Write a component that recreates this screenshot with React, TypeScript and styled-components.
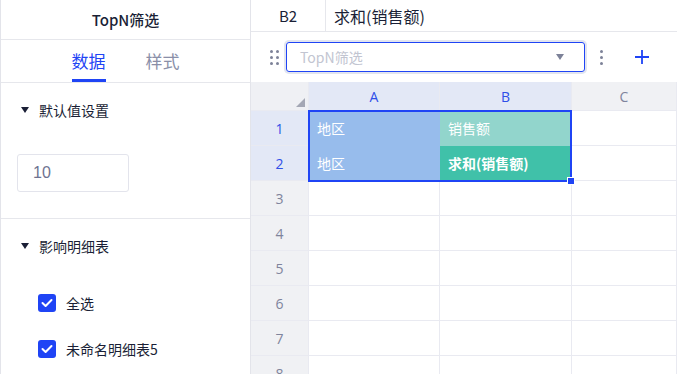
import styled, { createGlobalStyle } from "styled-components"

const GlobalStyle = createGlobalStyle`
  html, body {
    margin: 0;
    padding: 0;
    overflow: hidden;
    background: #fff;
  }
  body {
    font-family: "Noto Sans CJK SC", "Noto Sans", sans-serif;
    color: #1a1f36;
  }
`

const Page = styled.div`
  display: flex;
  width: 677px;
  height: 374px;
  overflow: hidden;
`

const SidePanel = styled.div`
  width: 249px;
  flex: none;
  border-left: 1px solid #e3e4ea;
  border-right: 1px solid #e3e4ea;
  display: flex;
  flex-direction: column;
`

const PanelTitle = styled.div`
  height: 40px;
  flex: none;
  display: flex;
  align-items: center;
  justify-content: center;
  font-size: 15px;
  font-weight: 500;
  border-bottom: 1px solid #e6e7ec;
  box-sizing: border-box;
`

const Tabs = styled.div`
  height: 43px;
  flex: none;
  display: flex;
  justify-content: center;
  gap: 40px;
  border-bottom: 1px solid #e6e7ec;
  box-sizing: border-box;
`

const Tab = styled.div<{ $active?: boolean }>`
  font-size: 17px;
  display: flex;
  align-items: center;
  padding-top: 1px;
  color: ${(p) => (p.$active ? "#1f44f5" : "#8a8fa8")};
  border-bottom: 3px solid ${(p) => (p.$active ? "#1f44f5" : "transparent")};
  box-sizing: border-box;
  height: 42px;
`

const Section = styled.div<{ $border?: boolean }>`
  flex: none;
  padding: 0 16px;
  border-bottom: ${(p) => (p.$border ? "1px solid #e6e7ec" : "none")};
`

const SectionHead = styled.div`
  display: flex;
  align-items: center;
  gap: 10px;
  height: 54px;
  padding-left: 4px;
  font-size: 14px;
  color: #1a1f36;
`

const Caret = styled.span`
  width: 0;
  height: 0;
  border-left: 4.5px solid transparent;
  border-right: 4.5px solid transparent;
  border-top: 6px solid #1a1f36;
`

const NumberBox = styled.div`
  width: 112px;
  height: 38px;
  box-sizing: border-box;
  border: 1px solid #e3e4ec;
  border-radius: 3px;
  display: flex;
  align-items: center;
  padding-left: 15px;
  font-family: "Liberation Sans", Arial, sans-serif;
  font-size: 16px;
  color: #6e7391;
  margin: 17px 0 26px;
`

const CheckList = styled.div`
  display: flex;
  flex-direction: column;
  gap: 26px;
  padding: 20px 0 0 21px;
`

const CheckRow = styled.div`
  display: flex;
  align-items: center;
  gap: 10px;
  font-size: 14px;
  color: #1a1f36;
`

const CheckBox = styled.span`
  width: 18px;
  height: 18px;
  border-radius: 3px;
  background: #1f44f5;
  display: flex;
  align-items: center;
  justify-content: center;
`

const Main = styled.div`
  flex: 1;
  display: flex;
  flex-direction: column;
  min-width: 0;
`

const FormulaBar = styled.div`
  height: 32px;
  flex: none;
  display: flex;
  border-bottom: 1px solid #e6e7ec;
  box-sizing: border-box;
  font-size: 16px;
`

const CellRef = styled.div`
  width: 74px;
  border-right: 1px solid #e6e7ec;
  display: flex;
  align-items: center;
  justify-content: center;
  color: #1a1f36;
  font-size: 15px;
`

const FormulaText = styled.div`
  display: flex;
  align-items: center;
  padding-left: 8px;
  color: #1a1f36;
`

const Toolbar = styled.div`
  height: 50px;
  flex: none;
  display: flex;
  align-items: center;
  padding-left: 19px;
`

const DragHandle = styled.div`
  display: grid;
  grid-template-columns: repeat(2, 3px);
  gap: 3px 3px;
  margin-right: 7px;
`

const Dot = styled.span`
  width: 3px;
  height: 3px;
  border-radius: 50%;
  background: #7d8298;
`

const Select = styled.div`
  width: 299px;
  height: 30px;
  box-sizing: border-box;
  border: 1px solid #1f44f5;
  border-radius: 3px;
  box-shadow: 0 0 0 2px #e2e5ef;
  display: flex;
  align-items: center;
  justify-content: space-between;
  padding: 0 20px 0 13px;
  font-size: 14px;
  color: #c2c5d1;
`

const SelectCaret = styled.span`
  width: 0;
  height: 0;
  border-left: 4.5px solid transparent;
  border-right: 4.5px solid transparent;
  border-top: 6px solid #7d8298;
`

const Kebab = styled.div`
  display: flex;
  flex-direction: column;
  gap: 3px;
  margin-left: 15px;
`

const PlusBtn = styled.div`
  margin-left: 31px;
  display: flex;
`

const SheetWrap = styled.div`
  position: relative;
  flex: 1;
  overflow: hidden;
`

const Sheet = styled.div`
  display: grid;
  grid-template-columns: 58px 131px 132px 1fr;
  grid-template-rows: 29px repeat(8, 35px);
`

type Tone = "corner" | "head" | "headSel" | "rowSel" | "row" | "cell" | "a" | "b1" | "b2"

const toneBg: Record<Tone, string> = {
  corner: "#eff0f4",
  head: "#f0f1f4",
  headSel: "#e3e8f6",
  rowSel: "#e3e8f6",
  row: "#f0f1f4",
  cell: "#fff",
  a: "#97bcec",
  b1: "#92d5cc",
  b2: "#40c1a9",
}

const isHeader = (t: Tone) => t === "head" || t === "headSel" || t === "row" || t === "rowSel"
const isFilled = (t: Tone) => t === "a" || t === "b1" || t === "b2"

const Cell = styled.div<{ $tone: Tone; $bold?: boolean }>`
  position: relative;
  box-sizing: border-box;
  border-right: 1px solid ${(p) => (isFilled(p.$tone) ? toneBg[p.$tone] : "#e9eaf1")};
  border-bottom: 1px solid ${(p) => (isFilled(p.$tone) ? toneBg[p.$tone] : "#e9eaf1")};
  background: ${(p) => toneBg[p.$tone]};
  display: flex;
  align-items: center;
  font-size: 14px;
  font-weight: ${(p) => (p.$bold ? 600 : 400)};
  justify-content: ${(p) => (isHeader(p.$tone) ? "center" : "flex-start")};
  padding-left: ${(p) => (isFilled(p.$tone) ? "8px" : "0")};
  color: ${(p) =>
    p.$tone === "headSel" || p.$tone === "rowSel"
      ? "#2f4fe8"
      : p.$tone === "head" || p.$tone === "row"
      ? "#7f849c"
      : "#fff"};
  font-family: ${(p) =>
    isHeader(p.$tone) ? `"Open Sans", "Noto Sans", sans-serif` : `"Noto Sans CJK SC", sans-serif`};
`

const CornerMark = styled.span`
  position: absolute;
  right: 3px;
  bottom: 3px;
  width: 0;
  height: 0;
  border-left: 9px solid transparent;
  border-bottom: 9px solid #a4a7b4;
`

const Selection = styled.div`
  position: absolute;
  left: 57px;
  top: 28px;
  width: 264px;
  height: 72px;
  box-sizing: border-box;
  border: 2px solid #1f44f5;
  pointer-events: none;
`

const FillHandle = styled.span`
  position: absolute;
  right: -5px;
  bottom: -5px;
  width: 6px;
  height: 6px;
  background: #1f44f5;
  border: 1px solid #fff;
`

const rows = [3, 4, 5, 6, 7, 8]

const Check = () => (
  <CheckBox>
    <svg width="12" height="10" viewBox="0 0 12 10">
      <path d="M1.5 5 L4.6 8 L10.5 2" fill="none" stroke="#fff" strokeWidth="2" strokeLinecap="round" strokeLinejoin="round" />
    </svg>
  </CheckBox>
)

export default function App() {
  return (
    <>
      <GlobalStyle />
      <Page>
        <SidePanel>
          <PanelTitle>TopN筛选</PanelTitle>
          <Tabs>
            <Tab $active>数据</Tab>
            <Tab>样式</Tab>
          </Tabs>
          <Section $border>
            <SectionHead>
              <Caret />
              默认值设置
            </SectionHead>
            <NumberBox>10</NumberBox>
          </Section>
          <Section>
            <SectionHead>
              <Caret />
              影响明细表
            </SectionHead>
            <CheckList>
              <CheckRow>
                <Check />
                全选
              </CheckRow>
              <CheckRow>
                <Check />
                未命名明细表5
              </CheckRow>
            </CheckList>
          </Section>
        </SidePanel>
        <Main>
          <FormulaBar>
            <CellRef>B2</CellRef>
            <FormulaText>求和(销售额)</FormulaText>
          </FormulaBar>
          <Toolbar>
            <DragHandle>
              {Array.from({ length: 6 }).map((_, i) => (
                <Dot key={i} />
              ))}
            </DragHandle>
            <Select>
              TopN筛选
              <SelectCaret />
            </Select>
            <Kebab>
              <Dot />
              <Dot />
              <Dot />
            </Kebab>
            <PlusBtn>
              <svg width="16" height="16" viewBox="0 0 16 16">
                <path d="M8 1 V15 M1 8 H15" stroke="#1f44f5" strokeWidth="1.8" />
              </svg>
            </PlusBtn>
          </Toolbar>
          <SheetWrap>
            <Sheet>
              <Cell $tone="corner">
                <CornerMark />
              </Cell>
              <Cell $tone="headSel">A</Cell>
              <Cell $tone="headSel">B</Cell>
              <Cell $tone="head">C</Cell>

              <Cell $tone="rowSel">1</Cell>
              <Cell $tone="a">地区</Cell>
              <Cell $tone="b1">销售额</Cell>
              <Cell $tone="cell" />

              <Cell $tone="rowSel">2</Cell>
              <Cell $tone="a">地区</Cell>
              <Cell $tone="b2" $bold>求和(销售额)</Cell>
              <Cell $tone="cell" />

              {rows.map((r) => [
                <Cell key={`h${r}`} $tone="row">{r}</Cell>,
                <Cell key={`a${r}`} $tone="cell" />,
                <Cell key={`b${r}`} $tone="cell" />,
                <Cell key={`c${r}`} $tone="cell" />,
              ])}
            </Sheet>
            <Selection>
              <FillHandle />
            </Selection>
          </SheetWrap>
        </Main>
      </Page>
    </>
  )
}
